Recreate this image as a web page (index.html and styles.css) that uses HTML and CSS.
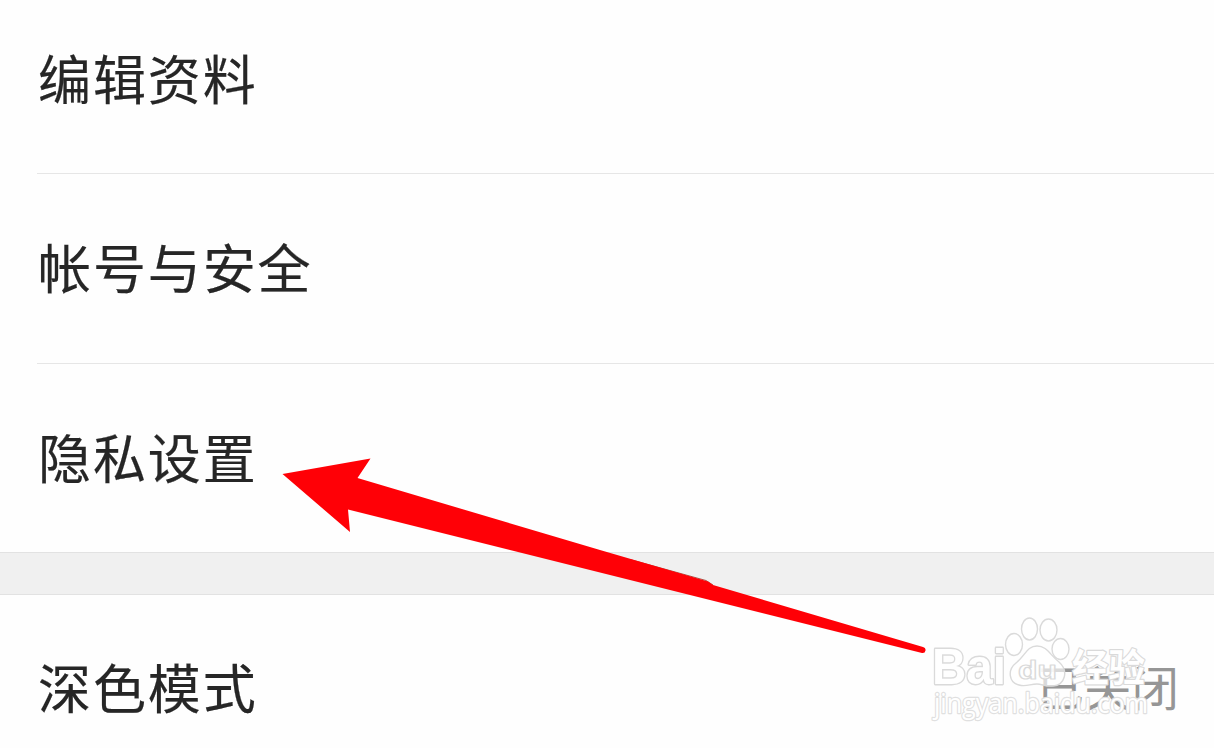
FILE: index.html
```
<!DOCTYPE html>
<html lang="zh-CN">
<head>
  <meta charset="utf-8">
  <title>设置</title>
  <link rel="stylesheet" href="styles.css">
</head>
<body>
  <main class="settings">
    <ul class="group group-account">
      <li class="row"><span class="label">编辑资料</span></li>
      <li class="row"><span class="label">帐号与安全</span></li>
      <li class="row"><span class="label">隐私设置</span></li>
    </ul>
    <div class="separator"></div>
    <ul class="group">
      <li class="row">
        <span class="label">深色模式</span>
        <span class="value">已关闭</span>
      </li>
    </ul>
  </main>

  <!-- arrow pointing at the privacy row -->
  <svg class="arrow" width="644" height="196" viewBox="282 458 644 196">
    <path class="arrow-edge" d="M630 559.500L706 580.500L713 585"/>
    <path class="arrow-body" d="M282.500 474L370.500 458.500L357.500 478L600 550L708 581.500L713 585L923 647A3 3 0 0 1 922 653L600 572.500L348 509.500L350 532Z"/>
  </svg>

  <svg class="watermark" width="260" height="115" viewBox="925 612 260 115">
    <text class="brand" x="932" y="684" textLength="74" lengthAdjust="spacingAndGlyphs">Bai</text>
    <g class="paw">
      <ellipse cx="1014" cy="644.500" rx="8.500" ry="11"/>
      <ellipse cx="1029.500" cy="629" rx="8" ry="11"/>
      <ellipse cx="1048.500" cy="630" rx="8.500" ry="11"/>
      <ellipse cx="1060.500" cy="649" rx="8.500" ry="10.500"/>
      <path d="M1037 646C1047 646 1050 655 1059 662C1069 671 1065 685 1053 686C1046 687 1042 684 1037 684C1030 684 1026 687 1019 685C1009 683 1007 670 1016 663C1025 656 1027 646 1037 646Z"/>
    </g>
    <text class="du" x="1018" y="679" textLength="39" lengthAdjust="spacingAndGlyphs">du</text>
    <text class="jingyan" x="1072" y="681" textLength="73" lengthAdjust="spacingAndGlyphs">经验</text>
    <text class="domain" x="934" y="713" textLength="214" lengthAdjust="spacingAndGlyphs">jingyan.baidu.com</text>
  </svg>
</body>
</html>
```

FILE: styles.css
```
* {
  box-sizing: border-box;
}

body {
  margin: 0;
  height: 748px;
  overflow: hidden;
  position: relative;
  background: #fefefe;
  color: #262626;
  font-family: "Noto Sans CJK SC", sans-serif;
}

.group {
  margin: 0;
  padding: 0 0 0 37px;
  list-style: none;
}

.row {
  height: 189px;
  display: flex;
  align-items: center;
  justify-content: space-between;
  padding: 0 35px 7px 1px;
}

.group .row:last-child {
  height: 188px;
}

.group-account .row:first-child {
  height: 174px;
  padding-bottom: 20px;
}

.group-account .row:nth-child(2) {
  height: 190px;
  padding-bottom: 6px;
}

.group-account .row:last-child {
  padding-bottom: 5px;
}

.group-account .row:not(:last-child) {
  border-bottom: 1px solid #e6e6e6;
}

.label {
  font-size: 53px;
  line-height: 80px;
  letter-spacing: 1.9px;
  -webkit-text-stroke: 0.2px #262626;
}

.value {
  font-size: 47.5px;
  line-height: 70px;
  color: #969696;
}

.separator {
  height: 43px;
  background: #f0f0f0;
  border-top: 1px solid #e2e2e2;
  border-bottom: 1px solid #e2e2e2;
}

.arrow {
  position: absolute;
  left: 282px;
  top: 458px;
}

.arrow-body {
  fill: #ff0006;
}

.arrow-edge {
  fill: none;
  stroke: #a8584c;
  stroke-width: 1;
}

.watermark {
  position: absolute;
  left: 925px;
  top: 612px;
  fill: #fff;
  stroke: #dadada;
  stroke-width: 1.4;
  stroke-linejoin: round;
}

.paw {
  fill-opacity: 0.65;
}

.brand {
  font-family: "Liberation Sans", Arial, sans-serif;
  font-weight: bold;
  font-size: 50px;
  stroke-width: 2.8;
  paint-order: stroke;
}

.du {
  font-family: "Liberation Sans", Arial, sans-serif;
  font-weight: bold;
  font-size: 26px;
  stroke-width: 1.2;
  fill-opacity: 0.8;
}

.jingyan {
  font-size: 38px;
  font-weight: bold;
  stroke-width: 2.4;
  paint-order: stroke;
}

.domain {
  font-family: "Open Sans", sans-serif;
  font-size: 27px;
  stroke: #e0e0e0;
  stroke-width: 2.4;
  paint-order: stroke;
}
```
